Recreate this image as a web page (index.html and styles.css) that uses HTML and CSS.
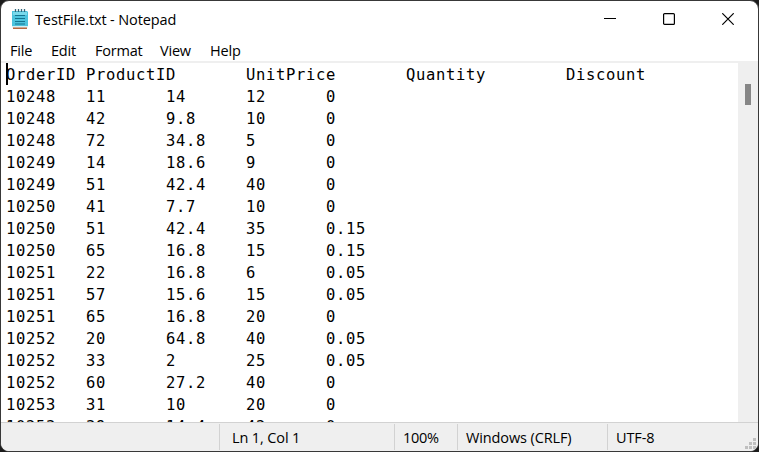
FILE: index.html
```html
<!DOCTYPE html>
<html lang="en">
<head>
<meta charset="utf-8">
<title>TestFile.txt - Notepad</title>
<link rel="stylesheet" href="styles.css">
</head>
<body>
<div class="window">
  <header class="titlebar">
    <svg class="app-icon" width="16" height="21" viewBox="0 0 16 21">
      <path d="M1 18h14v2H1z" fill="#b9663f"/>
      <path d="M0 2h15l1 1v15H0z" fill="#4dc3dd"/>
      <path d="M1 3h14v3H1z" fill="#79d9eb"/>
      <path d="M0 17h16v1.5H0z" fill="#d8eef2"/>
      <path d="M3 6.5h10M3 9.5h10M3 12.5h10M3 15h10" stroke="#14738f" stroke-width="1.2"/>
      <path d="M3.5 0v3M6.5 0v3M9.5 0v3M12.5 0v3" stroke="#32677b" stroke-width="1.3"/>
    </svg>
    <h1 class="title">TestFile.txt - Notepad</h1>
    <div class="controls">
      <svg width="12" height="12" viewBox="0 0 12 12"><path d="M0 5.5h12" stroke="#000"/></svg>
      <svg width="12" height="12" viewBox="0 0 12 12"><rect x=".6" y=".6" width="10.8" height="10.8" rx="1" fill="none" stroke="#000" stroke-width="1.2"/></svg>
      <svg width="12" height="12" viewBox="0 0 12 12"><path d="M.3.3l11.4 11.4M11.7.3L.3 11.7" stroke="#000" stroke-width="1.2"/></svg>
    </div>
  </header>
  <nav class="menu">
    <span class="file">File</span><span class="edit">Edit</span><span class="format">Format</span><span class="view">View</span><span>Help</span>
  </nav>
  <main class="editor">
    <div class="page"><i class="caret"></i><pre class="text">OrderID	ProductID	UnitPrice	Quantity	Discount
10248	11	14	12	0
10248	42	9.8	10	0
10248	72	34.8	5	0
10249	14	18.6	9	0
10249	51	42.4	40	0
10250	41	7.7	10	0
10250	51	42.4	35	0.15
10250	65	16.8	15	0.15
10251	22	16.8	6	0.05
10251	57	15.6	15	0.05
10251	65	16.8	20	0
10252	20	64.8	40	0.05
10252	33	2	25	0.05
10252	60	27.2	40	0
10253	31	10	20	0
10253	39	14.4	42	0</pre></div>
    <div class="scrollbar"><div class="thumb"></div></div>
  </main>
  <footer class="status">
    <span class="position">Ln 1, Col 1</span>
    <span class="zoom">100%</span>
    <span class="endings">Windows (CRLF)</span>
    <span class="encoding">UTF-8</span>
    <svg class="grip" width="11" height="11" viewBox="0 0 11 11"><path d="M8 0h3v3H8zM4 4h3v3H4zM8 4h3v3H8zM0 8h3v3H0zM4 8h3v3H4zM8 8h3v3H8z" fill="#bfbfbf"/></svg>
  </footer>
</div>
</body>
</html>
```

FILE: styles.css
```css
* { box-sizing: border-box; }
body {
  margin: 0;
  background: #1c1c1c;
  font-family: "Open Sans", "Noto Sans", sans-serif;
  font-size: 14.5px;
  color: #000;
}
.window {
  width: 759px;
  height: 452px;
  display: flex;
  flex-direction: column;
  overflow: hidden;
  background: #fff;
  border: 1px solid #383838;
  border-radius: 9px;
}
.titlebar {
  display: flex;
  height: 39px;
  padding-left: 11px;
}
.app-icon { margin-top: 8px; }
.title {
  margin: 0 0 0 7px;
  font-size: 14.5px;
  font-weight: 400;
  line-height: 37px;
  letter-spacing: -0.12px;
}
.controls {
  display: flex;
  gap: 47px;
  margin: 12px 24px 0 auto;
}
.menu {
  display: flex;
  height: 23px;
  padding-left: 9px;
  border-bottom: 2px solid #efefef;
  line-height: 21px;
  letter-spacing: -0.2px;
}
.file { width: 41px; }
.edit { width: 44px; }
.format { width: 65px; }
.view { width: 50px; }
.editor {
  display: flex;
  flex: 1;
  min-height: 0;
}
.page {
  position: relative;
  flex: 1;
  overflow: hidden;
  padding: 1px 0 0 5px;
}
.text {
  margin: 0;
  font: 15.5px/22px "DejaVu Sans Mono", monospace;
  letter-spacing: 0.67px;
  tab-size: 80px;
}
.caret {
  position: absolute;
  left: 5px;
  top: 0;
  width: 2px;
  height: 22px;
  background: #000;
}
.scrollbar {
  width: 20px;
  padding: 21px 7px 0;
  background: #efefef;
}
.thumb {
  height: 21px;
  background: #868686;
}
.status {
  position: relative;
  display: flex;
  height: 29px;
  padding: 1px 0 1px 218px;
  background: #efefef;
  border-top: 1px solid #d2d2d2;
  line-height: 27px;
  letter-spacing: -0.12px;
}
.status span {
  border-left: 1px solid #d2d2d2;
  padding-left: 8px;
}
.status .position { width: 175px; padding-left: 12px; }
.zoom { width: 63px; letter-spacing: -0.3px; }
.endings { width: 150px; }
.grip {
  position: absolute;
  right: 2px;
  bottom: 2px;
}
```
